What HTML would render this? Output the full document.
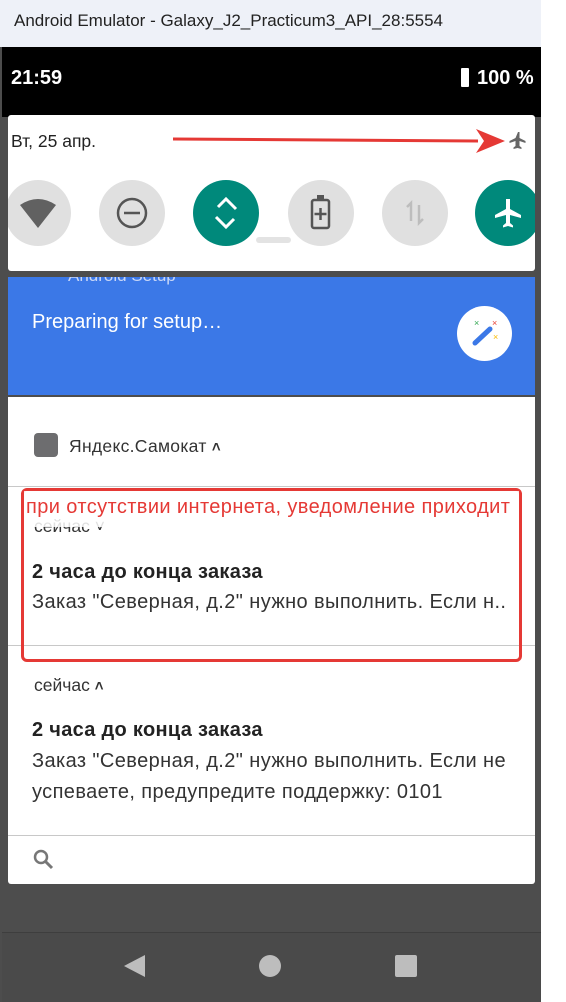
<!DOCTYPE html>
<html><head><meta charset="utf-8"><style>
*{margin:0;padding:0;box-sizing:border-box}
body{width:566px;height:1002px;position:relative;overflow:hidden;background:#fff;font-family:"Liberation Sans","DejaVu Sans",sans-serif}
.abs{position:absolute}
</style></head><body>
<div class="abs" style="left:0;top:0;width:541px;height:1002px;background:#4d4d4d"></div>
<div class="abs" style="left:0;top:0;width:541px;height:47px;background:#eef1f8;font-size:17px;color:#222;padding:11px 0 0 14px">Android Emulator - Galaxy_J2_Practicum3_API_28:5554</div>
<div class="abs" style="left:2px;top:47px;width:539px;height:70px;background:#000"></div>
<div class="abs" style="left:11px;top:67px;color:#fff;font-size:20px;font-weight:bold">21:59</div>
<div class="abs" style="left:461px;top:68px;width:8px;height:19px;background:#fff;border-radius:1px"></div>
<div class="abs" style="left:477px;top:67px;color:#fff;font-size:20px;font-weight:bold">100 %</div>
<div class="abs" style="left:8px;top:115px;width:527px;height:156px;background:#fff;border-radius:3px;overflow:hidden">
 <div class="abs" style="left:3px;top:16px;font-size:17.5px;color:#222">Вт, 25 апр.</div>
 <svg class="abs" style="left:0;top:0" width="527" height="156">
  <line x1="165" y1="24" x2="470" y2="26" stroke="#e53935" stroke-width="3"/>
  <polygon points="468,14 497,26 468,38 476,26" fill="#e53935"/>
  <path d="M511 17 l1.5 0 l0 6 l6 3 l0 2 l-6-2 l0 5 l2 1.5 l0 1.5 l-4-1 l-4 1 l0-1.5 l2-1.5 l0-5 l-6 2 l0-2 l6-3 z" fill="#666" transform="translate(-1,0)"/>
  <circle cx="30" cy="98" r="33" fill="#e0e0e0"/>
  <path d="M12 90 Q30 78 48 90 L30 113 Z" fill="#616161"/>
  <circle cx="124" cy="98" r="33" fill="#e0e0e0"/>
  <circle cx="124" cy="98" r="14" fill="none" stroke="#555" stroke-width="2.5"/>
  <line x1="116" y1="98" x2="132" y2="98" stroke="#555" stroke-width="2.5"/>
  <circle cx="218" cy="98" r="33" fill="#00897b"/>
  <path d="M210 92 l8-8 l10 10 M226 104 l-8 8 l-10-10" fill="none" stroke="#fff" stroke-width="3"/>
  <rect x="248" y="122" width="35" height="6" rx="3" fill="#e3e3e3"/>
  <circle cx="313" cy="98" r="33" fill="#e0e0e0"/>
  <rect x="304" y="85" width="17" height="28" rx="2" fill="none" stroke="#555" stroke-width="2.5"/>
  <rect x="309" y="80" width="7" height="5" fill="#555"/>
  <path d="M312.5 93 v12 M306.5 99 h12" stroke="#555" stroke-width="2.5"/>
  <circle cx="407" cy="98" r="33" fill="#e0e0e0"/>
  <path d="M403 106 v-18 l-4 4 M411 90 v18 l4-4" fill="none" stroke="#bdbdbd" stroke-width="2.5"/>
  <circle cx="500" cy="98" r="33" fill="#00897b"/>
  <path d="M498 84 l4 0 l0 10 l11 6 l0 3 l-11-3 l0 8 l3 2.5 l0 2 l-5-1.5 l-5 1.5 l0-2 l3-2.5 l0-8 l-11 3 l0-3 l11-6 z" fill="#fff"/>
 </svg>
</div>
<div class="abs" style="left:8px;top:277px;width:527px;height:118px;background:#3b78e7;overflow:hidden">
 <div class="abs" style="left:60px;top:-11px;font-size:17px;color:#c9d7f7">Android Setup</div>
 <div class="abs" style="left:24px;top:34px;font-size:20px;color:#fff">Preparing for setup…</div>
 <div class="abs" style="left:449px;top:29px;width:55px;height:55px;border-radius:50%;background:#fff"></div>
 <svg class="abs" style="left:449px;top:29px" width="55" height="55"><line x1="18" y1="37" x2="33" y2="23" stroke="#3b78e7" stroke-width="5" stroke-linecap="round"/><text x="17" y="20" font-size="9" fill="#34a853">×</text><text x="35" y="20" font-size="9" fill="#ea4335">×</text><text x="36" y="34" font-size="9" fill="#fbbc05">×</text></svg>
</div>
<div class="abs" style="left:8px;top:397px;width:527px;height:487px;background:#fff;border-radius:0 0 3px 3px"></div>
<div class="abs" style="left:34px;top:433px;width:24px;height:24px;border-radius:4px;background:#6d6d6f"></div>
<div class="abs" style="left:69px;top:436px;font-size:17.5px;color:#333;letter-spacing:0.3px">Яндекс.Самокат <b style="font-size:15px">˄</b></div>
<div class="abs" style="left:8px;top:486px;width:527px;height:1px;background:#c8c8c8"></div>
<div class="abs" style="left:34px;top:516px;font-size:17.5px;color:#333">сейчас ˅</div>
<div class="abs" style="left:32px;top:561px;font-size:20px;font-weight:bold;color:#222;letter-spacing:0.3px">2 часа до конца заказа</div>
<div class="abs" style="left:32px;top:591px;font-size:20px;color:#333;white-space:nowrap;letter-spacing:0.4px">Заказ "Северная, д.2" нужно выполнить. Если н..</div>
<div class="abs" style="left:8px;top:645px;width:527px;height:1px;background:#c8c8c8"></div>
<div class="abs" style="left:21px;top:488px;width:501px;height:174px;border:3px solid #e53935;border-radius:6px"></div>
<div class="abs" style="left:24px;top:491px;width:495px;height:36px;background:rgba(255,255,255,0.85)"></div>
<div class="abs" style="left:26px;top:496px;font-size:20px;color:#e53935;white-space:nowrap;letter-spacing:0.4px">при отсутствии интернета, уведомление приходит</div>
<div class="abs" style="left:34px;top:675px;font-size:17.5px;color:#333">сейчас <b style="font-size:15px">˄</b></div>
<div class="abs" style="left:32px;top:719px;font-size:20px;font-weight:bold;color:#222;letter-spacing:0.3px">2 часа до конца заказа</div>
<div class="abs" style="left:32px;top:746px;font-size:20px;color:#333;line-height:31px;width:495px;letter-spacing:0.4px">Заказ "Северная, д.2" нужно выполнить. Если не успеваете, предупредите поддержку: 0101</div>
<div class="abs" style="left:8px;top:835px;width:527px;height:1px;background:#c8c8c8"></div>
<svg class="abs" style="left:32px;top:848px" width="24" height="24"><circle cx="9" cy="9" r="6" fill="none" stroke="#777" stroke-width="2.5"/><line x1="13" y1="13" x2="20" y2="20" stroke="#777" stroke-width="3"/></svg>
<div class="abs" style="left:2px;top:932px;width:539px;height:70px;background:#4a4a4a;border-top:1px solid #3e3e3e"></div>
<svg class="abs" style="left:0;top:940px" width="541" height="60"><polygon points="145,15 145,37 124,26" fill="#bdbdbd"/><circle cx="270" cy="26" r="11" fill="#bdbdbd"/><rect x="395" y="15" width="22" height="22" rx="2" fill="#bdbdbd"/></svg>
</body></html>
